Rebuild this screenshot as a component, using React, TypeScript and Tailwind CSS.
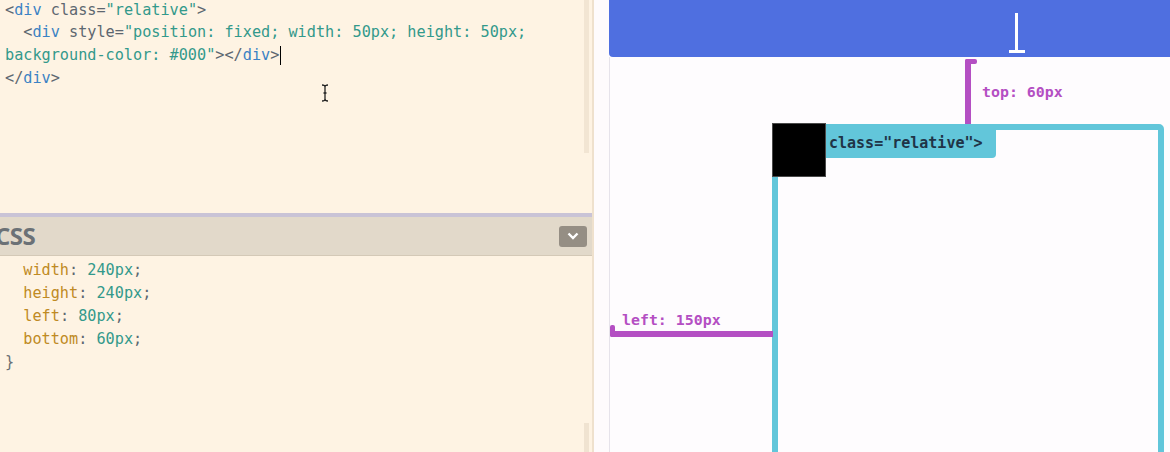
const mono = "font-['DejaVu_Sans_Mono',monospace]";

function C({ c, children }: { c: string; children: React.ReactNode }) {
  return <span className={c}>{children}</span>;
}

const gray = "text-[#5d6770]";
const blue = "text-[#3b82c4]";
const teal = "text-[#33998b]";
const gold = "text-[#bf8a24]";

function Editor() {
  return (
    <div className="relative h-[213px] overflow-hidden">
      <div className={`${mono} text-[15.2px] leading-[22.7px] whitespace-pre pl-[5px] -mt-[1.5px]`}>
        <div>
          <C c={gray}>&lt;</C>
          <C c={blue}>div</C>
          <C c={gray}> class=</C>
          <C c={teal}>"relative"</C>
          <C c={gray}>&gt;</C>
        </div>
        <div>
          <C c={gray}>  &lt;</C>
          <C c={blue}>div</C>
          <C c={gray}> style=</C>
          <C c={teal}>"position: fixed; width: 50px; height: 50px;</C>
        </div>
        <div className="flex items-center">
          <C c={teal}>background-color: #000"</C>
          <C c={gray}>&gt;&lt;/</C>
          <C c={blue}>div</C>
          <C c={gray}>&gt;</C>
          <span className="ml-px inline-block h-[19px] w-px bg-black" />
        </div>
        <div>
          <C c={gray}>&lt;/</C>
          <C c={blue}>div</C>
          <C c={gray}>&gt;</C>
        </div>
      </div>
      {/* scrollbar */}
      <div className="absolute right-[3px] top-0 h-[153px] w-[5px] bg-[#f2e5d3]" />
      {/* mouse I-beam */}
      <svg className="absolute left-[320px] top-[84px]" width="10" height="18" viewBox="0 0 10 18">
        <path d="M2 1 Q5 1 5 3 Q5 1 8 1 M5 3 V15 M2 17 Q5 17 5 15 Q5 17 8 17 M3.5 9 H6.5" stroke="#222" strokeWidth="1.3" fill="none" />
      </svg>
    </div>
  );
}

function CssPanel() {
  const rows: [string, string][] = [
    ["width", "240px"],
    ["height", "240px"],
    ["left", "80px"],
    ["bottom", "60px"],
  ];
  return (
    <div className="flex flex-1 flex-col">
      <div className="h-[4px] bg-[#c9c3d6]" />
      <div className="flex h-[39px] items-center justify-between border-b border-[#d4c9b7] bg-[#e2d9ca] pr-[5px]">
        <span className="-ml-[5px] font-['Open_Sans',sans-serif] text-[24px] font-bold tracking-[-0.5px] text-[#6b7176]">CSS</span>
        <button className="flex h-[21px] w-[28px] items-center justify-center rounded-[3px] bg-[#958e84]">
          <svg width="12" height="8" viewBox="0 0 12 8">
            <path d="M1.5 1.5 L6 6 L10.5 1.5" stroke="white" strokeWidth="2.4" fill="none" />
          </svg>
        </button>
      </div>
      <div className="relative flex-1 overflow-hidden">
        <div className={`${mono} text-[15.2px] leading-[22.9px] whitespace-pre pl-[5px] pt-[3px]`}>
          {rows.map(([p, v]) => (
            <div key={p}>
              <C c={gold}>{"  " + p}</C>
              <C c={gray}>: </C>
              <C c={teal}>{v}</C>
              <C c={gray}>;</C>
            </div>
          ))}
          <div className="text-[#6a6f74]">{"}"}</div>
        </div>
        <div className="absolute right-[3px] top-[167px] h-[40px] w-[5px] bg-[#f0e3d1]" />
      </div>
    </div>
  );
}

function Diagram() {
  const label = `${mono} text-[14.9px] font-bold leading-none text-[#b44fc3] whitespace-pre`;
  return (
    <div className="relative flex flex-1 flex-col">
      <div className="h-[57px] rounded-bl-[4px] bg-[#4f6fe0]" />
      <div className="flex-1 border-l border-[#e6e3ea]" />

      {/* bottom-anchor marker */}
      <div className="absolute left-[406px] top-[13px] h-[40px] w-[3px] bg-white" />
      <div className="absolute left-[400px] top-[50px] h-[3px] w-[16px] bg-white" />

      {/* top measure */}
      <div className="absolute left-[356px] top-[59px] h-[66px] w-[6px] rounded-tl-[2px] bg-[#b44fc3]" />
      <div className="absolute left-[356px] top-[59px] h-[5px] w-[12px] rounded-[2px] bg-[#b44fc3]" />
      <div className={`absolute left-[373px] top-[85px] ${label}`}>top: 60px</div>

      {/* relative box */}
      <div className="absolute left-[163px] top-[124px] h-[400px] w-[392px] rounded-tr-[5px] border-[6px] border-[#62c6da]" />
      <div className="absolute left-[217px] top-[124px] h-[34px] w-[170px] rounded-br-[4px] bg-[#62c6da] pl-[3px] pt-[12px]">
        <div className={`${mono} text-[15px] font-bold leading-none text-[#1f3447]`}>class="relative"&gt;</div>
      </div>
      <div className="absolute left-[163px] top-[123px] h-[54px] w-[54px] border border-[#4a4a4a] bg-black" />

      {/* left measure */}
      <div className="absolute left-[1px] top-[331px] h-[6px] w-[163px] rounded-bl-[2px] bg-[#b44fc3]" />
      <div className="absolute left-[1px] top-[325px] h-[12px] w-[5px] rounded-[2px] bg-[#b44fc3]" />
      <div className={`absolute left-[13px] top-[313px] ${label}`}>left: 150px</div>
    </div>
  );
}

export default function App() {
  return (
    <div className="flex h-[452px] w-[1170px] overflow-hidden bg-[#fefcfe]">
      <div className="flex w-[592px] shrink-0 flex-col bg-[#fef3e3]">
        <Editor />
        <CssPanel />
      </div>
      <div className="w-[2px] shrink-0 bg-[#efe1cd]" />
      <div className="w-[15px] shrink-0 bg-[#fefbfc]" />
      <Diagram />
    </div>
  );
}
